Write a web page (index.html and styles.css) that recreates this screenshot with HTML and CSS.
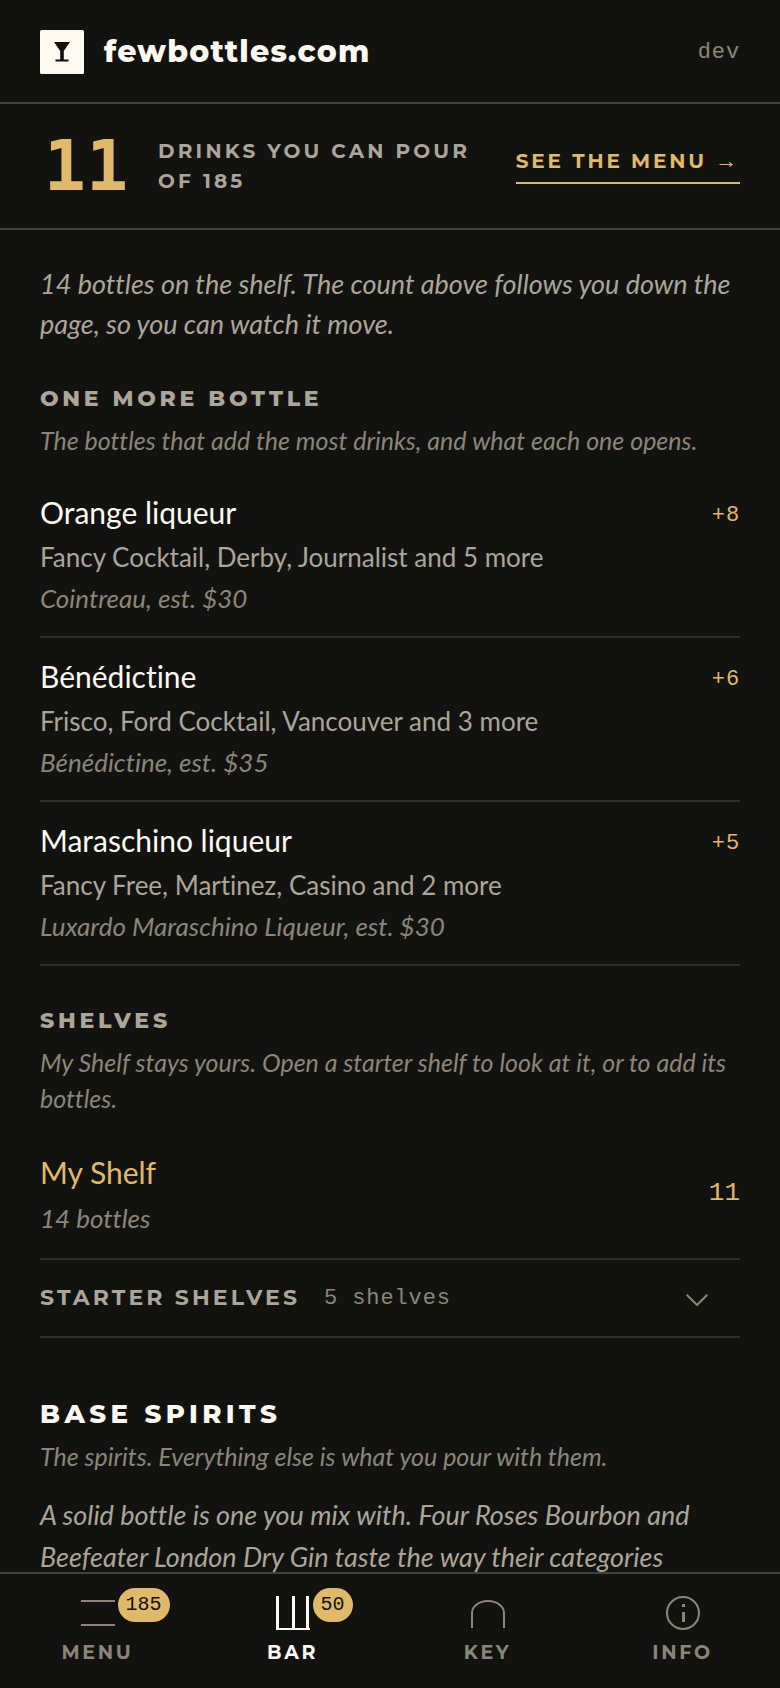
FILE: index.html
```html
<!DOCTYPE html>
<html lang="en">
<head>
    <meta charset="UTF-8">
    <meta name="viewport" content="width=device-width, initial-scale=1.0">
    <title>fewbottles.com</title>
    <link rel="stylesheet" href="styles.css">
</head>
<body>
    <header class="site-header">
        <a class="brand" href="#">
            <svg class="logo" viewBox="0 0 44 44" aria-hidden="true">
                <rect width="44" height="44" rx="1.5" fill="#fdf9f1"/>
                <path d="M14 12h16l-6.200 9v8.500h4.700v2h-13v-2h4.700v-8.500z" fill="#121310"/>
            </svg>
            fewbottles.com
        </a>
        <span class="version">dev</span>
    </header>

    <div class="count-bar">
        <span class="count">11</span>
        <p class="count-label">Drinks you can pour<br>of 185</p>
        <a class="menu-link" href="#">See the menu <span class="arrow">→</span></a>
    </div>

    <main>
        <p class="intro">14 bottles on the shelf. The count above follows you down the page, so you can watch it move.</p>

        <section>
            <h2>One more bottle</h2>
            <p class="hint">The bottles that add the most drinks, and what each one opens.</p>
            <ul class="rows">
                <li class="row">
                    <div class="row-text">
                        <h3>Orange liqueur</h3>
                        <p class="opens">Fancy Cocktail, Derby, Journalist and 5 more</p>
                        <p class="note">Cointreau, est. $30</p>
                    </div>
                    <span class="gain">+8</span>
                </li>
                <li class="row">
                    <div class="row-text">
                        <h3>Bénédictine</h3>
                        <p class="opens">Frisco, Ford Cocktail, Vancouver and 3 more</p>
                        <p class="note">Bénédictine, est. $35</p>
                    </div>
                    <span class="gain">+6</span>
                </li>
                <li class="row">
                    <div class="row-text">
                        <h3>Maraschino liqueur</h3>
                        <p class="opens">Fancy Free, Martinez, Casino and 2 more</p>
                        <p class="note">Luxardo Maraschino Liqueur, est. $30</p>
                    </div>
                    <span class="gain">+5</span>
                </li>
            </ul>
        </section>

        <section>
            <h2>Shelves</h2>
            <p class="hint">My Shelf stays yours. Open a starter shelf to look at it, or to add its bottles.</p>
            <a class="row shelf" href="#">
                <span class="row-text">
                    <span class="shelf-name">My Shelf</span>
                    <span class="note">14 bottles</span>
                </span>
                <span class="shelf-count">11</span>
            </a>
            <button class="starter" type="button" aria-expanded="false">
                <span class="starter-title">Starter shelves</span>
                <span class="starter-count">5 shelves</span>
                <svg class="chevron" viewBox="0 0 22 12" aria-hidden="true">
                    <path d="M0.700 0.700L11 11L21.300 0.700" fill="none" stroke="currentColor" stroke-width="2"/>
                </svg>
            </button>
        </section>

        <section class="spirits">
            <h2 class="big">Base spirits</h2>
            <p class="hint">The spirits. Everything else is what you pour with them.</p>
            <p class="lead">A solid bottle is one you mix with. Four Roses Bourbon and Beefeater London Dry Gin taste the way their categories</p>
        </section>
    </main>

    <nav class="tabs">
        <a class="tab" href="#">
            <svg class="tab-icon" viewBox="0 0 34 34" aria-hidden="true">
                <path d="M0 5h34M0 29h34" fill="none" stroke="currentColor" stroke-width="2"/>
            </svg>
            <span class="badge">185</span>
            Menu
        </a>
        <a class="tab active" href="#">
            <svg class="tab-icon" viewBox="0 0 34 34" aria-hidden="true">
                <path d="M1.500 0v33M17.500 0v33M31.500 0v33" fill="none" stroke="currentColor" stroke-width="3"/>
                <path d="M0 33h34" fill="none" stroke="currentColor" stroke-width="2"/>
            </svg>
            <span class="badge">50</span>
            Bar
        </a>
        <a class="tab" href="#">
            <svg class="tab-icon" viewBox="0 0 34 34" aria-hidden="true">
                <path d="M1 32V17A16 12 0 0 1 33 17V32" fill="none" stroke="currentColor" stroke-width="2"/>
            </svg>
            Key
        </a>
        <a class="tab" href="#">
            <svg class="tab-icon" viewBox="0 0 34 34" aria-hidden="true">
                <circle cx="17" cy="17" r="16" fill="none" stroke="currentColor" stroke-width="2"/>
                <path d="M16 8h3v3h-3zM16 16h3v10h-3z" fill="currentColor"/>
            </svg>
            Info
        </a>
    </nav>
</body>
</html>
```

FILE: styles.css
```css
* {
    box-sizing: border-box;
}

body {
    display: flex;
    flex-direction: column;
    height: 100vh;
    margin: 0;
    background-color: #121310;
    color: #aca598;
    font-family: Lato, sans-serif;
    font-size: 26px;
    font-variant-ligatures: none;
}

h2, h3, p, ul {
    margin: 0;
    padding: 0;
    list-style: none;
}

a {
    color: inherit;
    text-decoration: none;
}

.site-header {
    display: flex;
    align-items: center;
    justify-content: space-between;
    padding: 30px 40px 28px;
    border-bottom: 2px solid #42423a;
}

.brand {
    display: flex;
    align-items: center;
    gap: 20px;
    color: #fdf9f1;
    font-family: Montserrat, Inter, sans-serif;
    font-size: 30px;
    font-weight: 800;
    line-height: 44px;
    letter-spacing: 0.04em;
}

.logo {
    width: 44px;
    height: 44px;
}

.version {
    color: #8c8578;
    font-family: "Liberation Mono", monospace;
    font-size: 22px;
    letter-spacing: 0.04em;
}

.count-bar {
    display: flex;
    align-items: center;
    gap: 26px;
    padding: 32px 40px;
    border-bottom: 2px solid #42423a;
}

.count {
    min-width: 92px;
    color: #e0b96b;
    font-family: "DejaVu Sans Mono", monospace;
    font-size: 70px;
    font-weight: 700;
    line-height: 60px;
    text-align: center;
}

.count-label, .menu-link {
    font-family: Montserrat, Inter, sans-serif;
    font-size: 20px;
    font-weight: 700;
    line-height: 30px;
    letter-spacing: 0.16em;
    text-transform: uppercase;
}

.count-label {
    flex: 1;
}

.menu-link {
    color: #e0b96b;
    border-bottom: 2px solid #e0b96b;
    padding-bottom: 8px;
    line-height: 26px;
    letter-spacing: 0.14em;
    white-space: nowrap;
}

.arrow {
    font-family: "Liberation Sans", sans-serif;
    font-size: 22px;
    font-weight: 400;
    line-height: 1;
}

main {
    flex: 1;
    min-height: 0;
    overflow: hidden;
    padding: 34px 40px 0;
}

.intro, .lead {
    font-size: 27px;
    font-style: italic;
    line-height: 40px;
}

.lead {
    line-height: 42px;
    margin-top: 20px;
}

section {
    margin-top: 40px;
}

h2 {
    font-family: Montserrat, Inter, sans-serif;
    font-size: 22px;
    font-weight: 800;
    line-height: 30px;
    letter-spacing: 0.17em;
    text-transform: uppercase;
}

.hint {
    margin-top: 8px;
    color: #8c8578;
    font-size: 25px;
    font-style: italic;
    line-height: 36px;
}

.rows {
    margin-top: 16px;
}

.row {
    display: flex;
    justify-content: space-between;
    padding: 16px 0 20px;
    border-bottom: 2px solid #2c2c2a;
}

.row-text {
    display: flex;
    flex-direction: column;
    gap: 4px;
}

h3, .shelf-name {
    color: #fdf9f1;
    font-size: 30px;
    font-weight: 400;
    line-height: 44px;
}

.opens {
    line-height: 38px;
}

.note {
    color: #8c8578;
    font-style: italic;
    line-height: 36px;
}

.gain {
    color: #e0b96b;
    font-family: "Liberation Mono", monospace;
    font-size: 22px;
    line-height: 52px;
    letter-spacing: 0.04em;
}

.shelf {
    align-items: center;
    margin-top: 18px;
    padding-bottom: 22px;
}

.shelf .row-text {
    gap: 6px;
}

.shelf-name, .shelf-count {
    color: #e0b96b;
}

.shelf-count {
    font-family: "Liberation Mono", monospace;
}

.starter {
    display: flex;
    align-items: center;
    width: 100%;
    gap: 24px;
    padding: 20px 32px 20px 0;
    border: none;
    border-bottom: 2px solid #2c2c2a;
    background: none;
    color: #8c8578;
    cursor: pointer;
}

.starter-title {
    color: #aca598;
    font-family: Montserrat, Inter, sans-serif;
    font-size: 22px;
    font-weight: 700;
    line-height: 36px;
    letter-spacing: 0.14em;
    text-transform: uppercase;
}

.starter-count {
    font-family: "Liberation Mono", monospace;
    font-size: 22px;
    letter-spacing: 0.04em;
}

.chevron {
    width: 22px;
    height: 12px;
    margin-top: 4px;
    margin-left: auto;
}

.spirits {
    margin-top: 60px;
}

.big {
    color: #fdf9f1;
    font-size: 26px;
    line-height: 32px;
}

.tabs {
    display: grid;
    grid-template-columns: repeat(4, 1fr);
    padding: 22px 0;
    border-top: 2px solid #42423a;
}

.tab {
    position: relative;
    display: flex;
    flex-direction: column;
    align-items: center;
    gap: 10px;
    color: #8c8578;
    font-family: Montserrat, Inter, sans-serif;
    font-size: 19px;
    font-weight: 700;
    line-height: 26px;
    letter-spacing: 0.14em;
    text-transform: uppercase;
}

.active {
    color: #fdf9f1;
}

.tab-icon {
    width: 34px;
    height: 34px;
}

.badge {
    position: absolute;
    top: -8px;
    left: 50%;
    margin-left: 20px;
    padding: 0 8px;
    border-radius: 17px;
    background-color: #e0b96b;
    color: #121310;
    font-family: "Liberation Mono", monospace;
    font-size: 20px;
    font-weight: 400;
    line-height: 34px;
    letter-spacing: 0;
}
```
